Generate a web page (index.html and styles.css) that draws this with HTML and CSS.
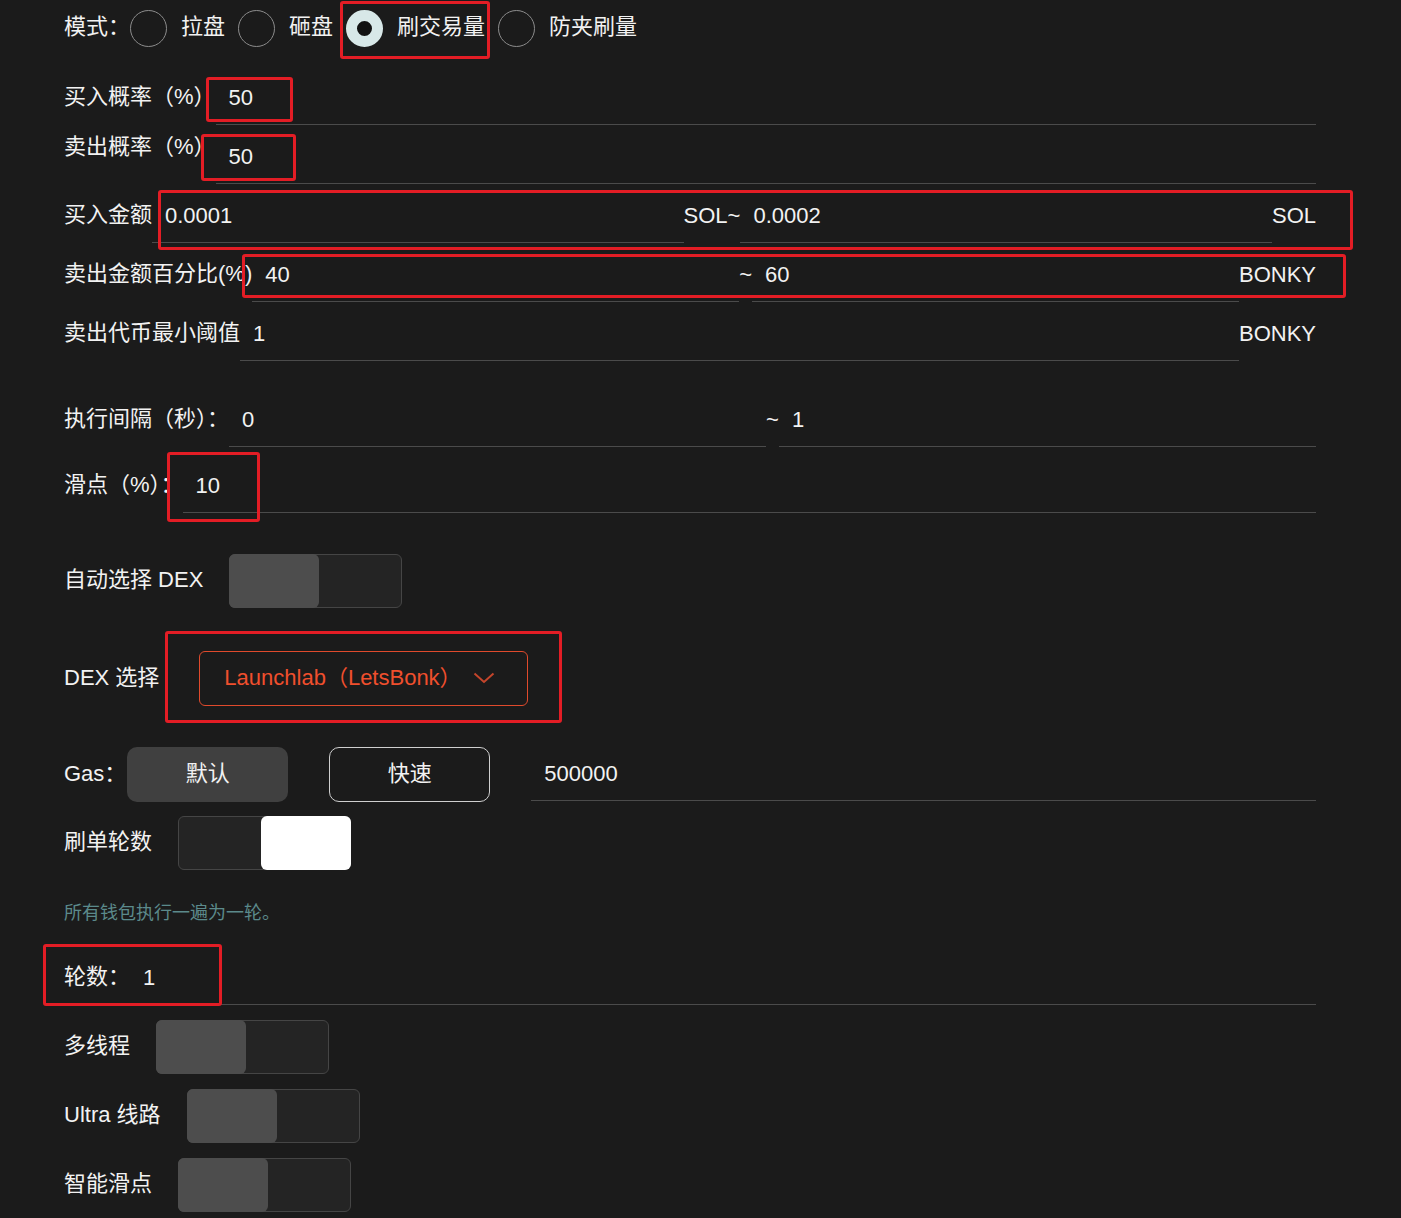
FILE: index.html
```html
<!DOCTYPE html>
<html lang="zh-CN">
<head>
<meta charset="utf-8">
<title>刷交易量设置</title>
<link rel="stylesheet" href="styles.css">
</head>
<body>
<div class="page">
  <div class="form">
    <div class="row row-mode">
      <span class="label">模式：</span>
      <div class="radio"><span class="dot"></span><span>拉盘</span></div>
      <div class="radio"><span class="dot"></span><span>砸盘</span></div>
      <div class="radio"><span class="dot dot-on"></span><span>刷交易量</span></div>
      <div class="radio"><span class="dot"></span><span>防夹刷量</span></div>
    </div>

    <div class="row row-first">
      <span class="label">买入概率（%）</span>
      <div class="field">50</div>
    </div>
    <div class="row">
      <span class="label label-top">卖出概率（%）</span>
      <div class="field">50</div>
    </div>
    <div class="row">
      <span class="label">买入金额</span>
      <div class="field">0.0001</div>
      <span class="unit">SOL~</span>
      <div class="field">0.0002</div>
      <span class="unit">SOL</span>
    </div>
    <div class="row">
      <span class="label">卖出金额百分比(%)</span>
      <div class="field">40</div>
      <span class="unit">~</span>
      <div class="field">60</div>
      <span class="unit">BONKY</span>
    </div>
    <div class="row">
      <span class="label">卖出代币最小阈值</span>
      <div class="field">1</div>
      <span class="unit">BONKY</span>
    </div>

    <div class="row row-interval">
      <span class="label">执行间隔（秒）：</span>
      <div class="field">0</div>
      <span class="unit">~</span>
      <div class="field">1</div>
    </div>
    <div class="row row-slip">
      <span class="label">滑点（%）：</span>
      <div class="field">10</div>
    </div>

    <div class="row row-auto">
      <span class="label label-toggle">自动选择 DEX</span>
      <div class="toggle"><span class="knob"></span></div>
    </div>

    <div class="row row-dex">
      <span class="label">DEX 选择</span>
      <div class="select">
        <span>Launchlab（LetsBonk）</span>
        <svg class="chevron" width="22" height="12" viewBox="0 0 22 12"><polyline points="1.5,1.5 11,10 20.5,1.5" fill="none" stroke="#c4452b" stroke-width="2"/></svg>
      </div>
    </div>

    <div class="row row-gas">
      <span class="label">Gas：</span>
      <div class="btn btn-fill">默认</div>
      <div class="btn btn-outline">快速</div>
      <div class="field field-gas">500000</div>
    </div>

    <div class="row row-rounds-toggle">
      <span class="label label-toggle">刷单轮数</span>
      <div class="toggle toggle-on"><span class="knob"></span></div>
    </div>

    <p class="hint">所有钱包执行一遍为一轮。</p>

    <div class="row row-rounds">
      <span class="label">轮数：</span>
      <div class="field">1</div>
    </div>

    <div class="row row-sw">
      <span class="label label-toggle">多线程</span>
      <div class="toggle"><span class="knob"></span></div>
    </div>
    <div class="row row-sw">
      <span class="label label-toggle">Ultra 线路</span>
      <div class="toggle"><span class="knob"></span></div>
    </div>
    <div class="row row-sw">
      <span class="label label-toggle">智能滑点</span>
      <div class="toggle"><span class="knob"></span></div>
    </div>
  </div>

  <div class="mark mark-mode"></div>
  <div class="mark mark-buyprob"></div>
  <div class="mark mark-sellprob"></div>
  <div class="mark mark-buyamt"></div>
  <div class="mark mark-sellpct"></div>
  <div class="mark mark-slip"></div>
  <div class="mark mark-dex"></div>
  <div class="mark mark-rounds"></div>
</div>
</body>
</html>
```

FILE: styles.css
```css
* {
  box-sizing: border-box;
}

body {
  margin: 0;
  background: #1b1b1b;
  color: #f2f2f2;
  font-family: "Liberation Sans", "Noto Sans CJK SC", sans-serif;
  font-size: 22px;
  line-height: 26px;
}

.page {
  position: relative;
  width: 1401px;
  min-height: 1218px;
  padding-left: 64px;
  overflow: hidden;
}

.form {
  width: 1252px;
}

.row {
  display: flex;
  align-items: center;
  height: 54px;
  margin-top: 5px;
}

.label {
  flex: none;
  white-space: nowrap;
  padding-bottom: 2px;
}

.label-top {
  align-self: flex-start;
  margin-top: 2px;
  line-height: 30px;
}

.label-toggle {
  margin-right: 26px;
}

.field {
  flex: 1;
  height: 100%;
  display: flex;
  align-items: center;
  padding-left: 13px;
  border-bottom: 1px solid #4b4b4b;
  white-space: nowrap;
}

.unit {
  flex: none;
  white-space: nowrap;
}

/* mode radios */
.row-mode {
  height: 56px;
  margin-top: 0;
}

.radio {
  display: flex;
  align-items: center;
  gap: 14px;
  margin-right: 13px;
}

.radio span:last-child {
  padding-bottom: 2px;
}

.dot {
  width: 37px;
  height: 37px;
  border-radius: 50%;
  border: 1px solid #8c8c8c;
}

.dot-on {
  border: 11px solid #d8e8e8;
  background: #121212;
}

.row-first {
  margin-top: 15px;
}

.row-interval {
  margin-top: 32px;
}

.row-slip {
  margin-top: 12px;
}

/* toggles */
.toggle {
  display: flex;
  width: 173px;
  height: 54px;
  border: 1px solid #454545;
  border-radius: 6px;
  background: #242424;
}

.knob {
  width: 90px;
  margin: -1px;
  border-radius: 6px;
  background: #4d4d4d;
}

.toggle-on {
  justify-content: flex-end;
}

.toggle-on .knob {
  background: #ffffff;
}

.row-auto {
  margin-top: 41px;
}

/* dex select */
.row-dex {
  height: 55px;
  margin-top: 43px;
}

.select {
  display: flex;
  align-items: center;
  width: 329px;
  height: 55px;
  margin-left: 40px;
  padding-left: 24px;
  padding-bottom: 2px;
  border: 1px solid #e04a2c;
  border-radius: 6px;
  color: #f04f2d;
}

.chevron {
  margin-left: auto;
  margin-right: 32px;
}

/* gas */
.row-gas {
  height: 55px;
  margin-top: 41px;
}

.btn {
  display: flex;
  align-items: center;
  justify-content: center;
  width: 161px;
  height: 55px;
  padding-bottom: 2px;
  border-radius: 10px;
  flex: none;
}

.btn-fill {
  margin-left: 1px;
  background: #404040;
}

.btn-outline {
  margin-left: 41px;
  border: 1px solid #cfcfcf;
}

.field-gas {
  margin-left: 41px;
  align-self: flex-start;
  height: 54px;
}

.row-rounds-toggle {
  margin-top: 14px;
}

.hint {
  margin: 31px 0 0;
  font-size: 18px;
  line-height: 24px;
  color: #5b8a8b;
}

.row-rounds {
  margin-top: 26px;
}

.row-sw {
  margin-top: 15px;
}

/* red annotation frames */
.mark {
  position: absolute;
  border: 3px solid #e31d25;
  border-radius: 3px;
}

.mark-mode {
  left: 340px;
  top: 1px;
  width: 150px;
  height: 58px;
}

.mark-buyprob {
  left: 206px;
  top: 77px;
  width: 87px;
  height: 45px;
}

.mark-sellprob {
  left: 201px;
  top: 134px;
  width: 95px;
  height: 47px;
}

.mark-buyamt {
  left: 158px;
  top: 190px;
  width: 1195px;
  height: 60px;
}

.mark-sellpct {
  left: 242px;
  top: 254px;
  width: 1104px;
  height: 44px;
}

.mark-slip {
  left: 167px;
  top: 452px;
  width: 93px;
  height: 70px;
}

.mark-dex {
  left: 165px;
  top: 631px;
  width: 397px;
  height: 92px;
}

.mark-rounds {
  left: 43px;
  top: 944px;
  width: 179px;
  height: 62px;
}
```
